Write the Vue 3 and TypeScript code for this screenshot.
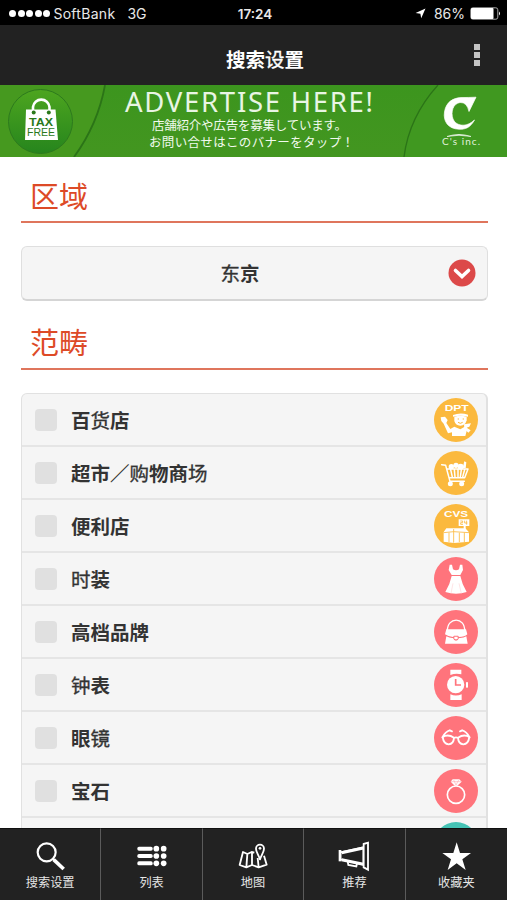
<script setup lang="ts">
interface Run {
  text: string
  light?: boolean
}
interface Category {
  id: string
  label: Run[]
  color: string
}

const amber = '#fbb93e'
const coral = '#ff747c'

const categories: Category[] = [
  { id: 'dept', color: amber, label: [{ text: '百' }, { text: '货', light: true }, { text: '店' }] },
  {
    id: 'cart',
    color: amber,
    label: [{ text: '超市／' }, { text: '购', light: true }, { text: '物商' }, { text: '场', light: true }],
  },
  { id: 'cvs', color: amber, label: [{ text: '便利店' }] },
  { id: 'dress', color: coral, label: [{ text: '时', light: true }, { text: '装' }] },
  { id: 'bag', color: coral, label: [{ text: '高档品牌' }] },
  { id: 'watch', color: coral, label: [{ text: '钟', light: true }, { text: '表' }] },
  { id: 'glasses', color: coral, label: [{ text: '眼' }, { text: '镜', light: true }] },
  { id: 'ring', color: coral, label: [{ text: '宝石' }] },
  { id: 'more', color: '#45c3b5', label: [] },
]

const tabs: { id: string; label: string }[] = [
  { id: 'search', label: '搜索设置' },
  { id: 'list', label: '列表' },
  { id: 'map', label: '地图' },
  { id: 'promo', label: '推荐' },
  { id: 'star', label: '收藏夹' },
]
</script>

<template>
  <div class="screen">
    <div class="status">
      <div class="carrier">
        <span class="dots"><i v-for="n in 5" :key="n"></i></span>
        <span class="operator">SoftBank</span>
        <span>3G</span>
      </div>
      <div class="clock">17:24</div>
      <div class="power">
        <svg class="locate" width="11" height="11" viewBox="0 0 11 11"><path d="M10.5.5 6.2 10.2 5.4 5.7.6 5z" fill="#fff" /></svg>
        <span>86%</span>
        <svg width="31" height="13" viewBox="0 0 31 13">
          <rect x=".8" y=".8" width="27" height="11.4" rx="2" fill="none" stroke="#aaa" />
          <rect x="1" y="1" width="22.5" height="11" rx="1" fill="#fff" />
          <path d="M29 4.5q2 2 0 4z" fill="#fff" />
        </svg>
      </div>
    </div>

    <header class="header">
      <h1>搜索<span class="light">设</span>置</h1>
      <div class="kebab"><i></i><i></i><i></i></div>
    </header>

    <svg class="banner" width="507" height="72" viewBox="0 0 507 72">
      <defs>
        <linearGradient id="badge" x1="0" y1="0" x2="0" y2="1">
          <stop offset="0" stop-color="#4da51f" /><stop offset="1" stop-color="#26851d" />
        </linearGradient>
        <linearGradient id="field" x1="0" y1="0" x2="0" y2="1">
          <stop offset="0" stop-color="#3c951e" /><stop offset="1" stop-color="#439620" />
        </linearGradient>
      </defs>
      <rect width="507" height="72" fill="url(#field)" />
      <path d="M0 0H105Q98 39 74 72H0z" fill="#46991f" />
      <path d="M507 0H438Q409 32 404 72H507z" fill="#409820" />
      <path d="M105 0Q98 39 74 72" fill="none" stroke="#2b7417" stroke-width="1.8" />
      <path d="M438 0Q409 32 404 72" fill="none" stroke="#2b7417" stroke-width="1.3" />
      <circle cx="40.5" cy="36.5" r="32" fill="url(#badge)" stroke="#2d7a1d" />
      <path d="M33 31V22a8.3 8.3 0 0 1 16.500 0V31" fill="none" stroke="#fff" stroke-width="2.600" />
      <path d="M26 24.500H55.500L58 55H25z" fill="#fff" />
      <circle cx="33.700" cy="27.500" r="2" fill="#2b791b" />
      <circle cx="48.800" cy="27.500" r="2" fill="#2b791b" />
      <text class="tax" x="29" y="40.500" textLength="24" lengthAdjust="spacingAndGlyphs">TAX</text>
      <text class="free" x="27" y="50.500" textLength="28" lengthAdjust="spacingAndGlyphs">FREE</text>
      <text class="advert" x="125" y="27" textLength="248">ADVERTISE HERE!</text>
      <text class="jp" x="152" y="45" textLength="195">店舗紹介や広告を募集しています。</text>
      <text class="jp" x="149" y="62" textLength="205">お問い合せはこのバナーをタップ！</text>
      <path d="M476 12.200 469 26.500Q467 17 460 17.500C453 18.500 450.500 27 453 34C456 41 466 43 474.500 35C470 43 465 44.500 459 44.200C448 44 443 36 444.500 27C446 17 453 13 461 12.600Q469 12.500 476 12.200z" fill="#fff" stroke="#fff" stroke-width=".7" />
      <path d="M447 51.500Q459 47.500 471 51.500Q459 49 447 51.500z" fill="#fff" stroke="#fff" stroke-width=".6" />
      <text class="brand" x="442" y="60" textLength="38">C's inc.</text>
    </svg>

    <main class="content">
      <h2>区域</h2>
      <button class="select">
        <span><span class="light">东</span>京</span>
        <svg width="28" height="28" viewBox="0 0 28 28">
          <circle cx="14" cy="14" r="13.500" fill="#dc4949" />
          <path d="M7.500 11.500 14 17.500 20.500 11.500" fill="none" stroke="#fff" stroke-width="3.600" stroke-linecap="round" />
        </svg>
      </button>
      <h2>范畴</h2>
      <ul class="list">
        <li v-for="c in categories" :key="c.id">
          <i class="check"></i>
          <span class="label"><span v-for="r in c.label" :key="r.text" :class="{ light: r.light }">{{ r.text }}</span></span>
          <svg class="icon" width="44" height="44" viewBox="0 0 132 132">
            <circle cx="66" cy="66" r="66" :fill="c.color" />
            <template v-if="c.id === 'dept'">
              <text class="mark" x="32" y="38" textLength="72" lengthAdjust="spacingAndGlyphs">DPT</text>
              <g fill="#fff">
                <path d="M57 51Q79 42 102 50V56Q79 50 57 56z" />
                <path d="M61 56Q79 51 98 56V67Q94 83 79 83Q65 83 61 69z" />
                <path d="M20 58 33 56 41 66 37 75 49 93 61 86 79 94 92 86 99 95 94 114H54V103L42 106 29 77 22 69z" />
                <path d="M90 79 111 76 106 86 98 89 110 97 103 104 91 92z" />
              </g>
              <g fill="none" :stroke="c.color" stroke-width="3"><path d="M71 63h4M86 63h4M72 73q7 6 14 0" /></g>
            </template>
            <template v-else-if="c.id === 'cart'">
              <g fill="#fff">
                <circle cx="52" cy="47" r="8" /><circle cx="66" cy="43" r="8" /><circle cx="80" cy="47" r="9" />
                <path d="M86 51 91 31 97 34 95 52z" />
              </g>
              <g fill="none" stroke="#fff" stroke-width="4.500" stroke-linecap="round" stroke-linejoin="round">
                <path d="M23 41 35 43 48 91H91M39 54H102L92 80H46M50 56l5 22M61 56l2 22M72 56v22M82 56l-3 22M92 56l-6 22" />
              </g>
              <circle cx="49" cy="98" r="7.500" fill="#fff" /><circle cx="83" cy="98" r="7.500" fill="#fff" />
            </template>
            <template v-else-if="c.id === 'cvs'">
              <text class="mark" x="30" y="38" textLength="72" lengthAdjust="spacingAndGlyphs">CVS</text>
              <path d="M74 46H106V66H95V76H89V66H74z" fill="#fff" />
              <path d="M79 51h7v5h-6v5h7M92 50v7h8M98 50v12" fill="none" :stroke="c.color" stroke-width="2.500" />
              <path d="M37 73H94L105 85V113L60 117 29 113V84z" fill="#fff" />
              <path d="M29 86 59 83 105 86M59 75V116M45 86V114M76 86V114M91 86V114" fill="none" :stroke="c.color" stroke-width="2.500" />
            </template>
            <template v-else-if="c.id === 'dress'">
              <path d="M47 23H54L57 37Q66 43 75 37L78 23H85L87 39 79 54H53L44 39z" fill="#fff" />
              <path d="M53 57H79Q84 82 98 105Q66 116 34 105Q48 82 53 57z" fill="#fff" />
              <path d="M57 79 51 109M75 79 82 109" stroke="#ffc8cb" stroke-width="1.500" />
            </template>
            <template v-else-if="c.id === 'bag'">
              <path d="M40 64C39 19 94 19 92 64" fill="none" stroke="#fff" stroke-width="4" />
              <path d="M37 58H96L100 73Q92 81 75 81L72 77H60L57 81Q42 80 33 73z" fill="#fff" />
              <path d="M37 79Q48 85 57 84Q60 92 66 92T75 84Q88 85 97 79L101 101H33z" fill="#fff" />
              <path d="M61 80H71V86Q66 90 61 86z" fill="#fff" />
            </template>
            <template v-else-if="c.id === 'watch'">
              <path d="M49 20H82V34Q66 29 49 36zM49 94Q66 101 83 94V111H49z" fill="#fff" />
              <circle cx="65" cy="65" r="26" fill="#fff" />
              <path d="M65 48V66H81" fill="none" :stroke="c.color" stroke-width="5" />
              <rect x="96" y="57" width="6" height="17" rx="2" fill="#fff" />
            </template>
            <g v-else-if="c.id === 'glasses'" fill="none" stroke="#fff" stroke-width="5.500" stroke-linecap="round">
              <path d="M26 63Q42 53 60 65Q59 84 44 85Q29 84 26 63zM106 63Q90 53 72 65Q73 84 88 85Q103 84 106 63zM60 66Q66 62 72 66M25 64Q35 46 47 43L54 46M107 64Q97 46 85 43L78 46" />
            </g>
            <template v-else-if="c.id === 'ring'">
              <circle cx="66" cy="77" r="26" fill="none" stroke="#fff" stroke-width="5" />
              <path d="M56 31H76L83 38 70 50H62L50 38z" fill="#fff" />
              <path d="M51 38H82M59 33l7 15 8-15" fill="none" stroke="#ff9ba0" stroke-width="1.500" />
            </template>
          </svg>
        </li>
      </ul>
    </main>

    <nav class="tabs">
      <a v-for="t in tabs" :key="t.id">
        <svg width="34" height="32" viewBox="0 0 102 96">
          <template v-if="t.id === 'search'">
            <circle cx="41" cy="37" r="27" fill="none" stroke="#fff" stroke-width="6.500" />
            <path d="M62 59 92 87" stroke="#fff" stroke-width="11" /><path d="M58 55 67 63" stroke="#fff" stroke-width="5" />
          </template>
          <g v-else-if="t.id === 'list'" fill="#fff">
            <template v-for="y in [26, 48, 70]" :key="y">
              <rect x="7" :y="y - 6" width="46" height="12" rx="5" />
              <circle cx="64" :cy="y" r="8.500" /><circle cx="86" :cy="y" r="8.500" />
            </template>
          </g>
          <g v-else-if="t.id === 'map'" fill="none" stroke="#fff" stroke-width="5.500" stroke-linejoin="round">
            <path d="M55 38 47 36 34 42 21 36 11 75 31 82 48 75 68 82 92 74 84 47M34 42 31 82M48 38V75M65 54 68 82" />
            <path d="M72 58C67 44 60 36 60 26A12 12 0 0 1 84 26C84 36 77 44 72 58z" fill="#222" /><circle cx="72" cy="25" r="4" fill="#fff" stroke="none" />
          </g>
          <g v-else-if="t.id === 'promo'" fill="none" stroke="#fff" stroke-width="5.500">
            <path d="M9 30V64" stroke-width="8" />
            <path d="M10 37 79 22V74L10 58zM80 12 93 8V89L80 82z" /><path d="M14 38 79 24M14 59 79 73" stroke-width="9" />
            <path d="M32 64 34 75 58 79 60 70" />
          </g>
          <path v-else d="M53 7 63 39H96L70 58 80 90 53 70 26 90 36 58 10 39H43z" fill="#fff" />
        </svg>
        <span>{{ t.label }}</span>
      </a>
    </nav>
  </div>
</template>

<style>
body {
  margin: 0;
  overflow: hidden;
}
</style>

<style scoped>
.screen {
  width: 507px;
  height: 900px;
  display: flex;
  flex-direction: column;
  overflow: hidden;
  background: #fff;
  color: #333;
  font-family: "Liberation Sans", "Noto Sans CJK SC", sans-serif;
}
.status {
  flex: none;
  height: 25px;
  display: grid;
  grid-template-columns: 1fr auto 1fr;
  align-items: center;
  padding: 2px 6px 0 9px;
  box-sizing: border-box;
  background: #000;
  color: #e8e8e8;
  font-family: Inter, "Liberation Sans", sans-serif;
  font-size: 14px;
}
.carrier,
.power,
.dots {
  display: flex;
  align-items: center;
}
.dots {
  gap: 1.600px;
  margin-right: 3px;
}
.dots i {
  width: 7px;
  height: 7px;
  border-radius: 50%;
  background: #fff;
}
.operator {
  margin-right: 12px;
  letter-spacing: 0.3px;
}
.clock {
  font-weight: 600;
  font-size: 13.500px;
}
.power {
  justify-content: flex-end;
  gap: 5px;
}
.locate {
  margin-right: 3px;
}
.header {
  flex: none;
  height: 60px;
  display: grid;
  grid-template-columns: 30px 1fr 30px;
  align-items: center;
  padding: 0 15px 0 38px;
  background: #222;
  color: #fff;
}
h1 {
  grid-column: 2;
  margin: 8px 0 0;
  font: bold 19.500px/28px "Noto Sans CJK SC", sans-serif;
  text-align: center;
}
.kebab {
  display: grid;
  gap: 2px;
  justify-content: center;
}
.kebab i {
  width: 6px;
  height: 6px;
  background: #c4c4c4;
}
.banner {
  flex: none;
  display: block;
}
.tax {
  font: bold 11.500px "Liberation Sans", sans-serif;
  fill: #2b791b;
}
.free {
  font: 11px "Liberation Sans", sans-serif;
  fill: #2b791b;
}
.advert {
  font: 400 27.500px "Noto Sans", "Open Sans", sans-serif;
  fill: #e9f5e4;
}
.jp {
  font: 12.500px "Noto Sans CJK JP", sans-serif;
  fill: #f1faee;
}
.brand {
  font: 10px Lato, sans-serif;
  fill: #e2f2dc;
}
.content {
  flex: 1;
  min-height: 0;
  overflow: hidden;
  padding: 0 19px 0 21px;
}
h2 {
  margin: 0;
  height: 66px;
  padding: 17px 0 0 9px;
  box-sizing: border-box;
  border-bottom: 2px solid #df755c;
  color: #dd4a27;
  font: 29px/42px "Noto Sans CJK SC", sans-serif;
}
.select {
  display: grid;
  grid-template-columns: 28px 1fr 28px;
  align-items: center;
  width: 467px;
  height: 55px;
  margin: 23px 0 2px;
  padding: 0 11px 0 0;
  border: 1px solid #dfdfdf;
  border-bottom: 2px solid #d5d5d5;
  border-radius: 6px;
  background: #f5f5f5;
  color: #333;
  font: bold 19.500px/28px "Noto Sans CJK SC", sans-serif;
}
.select > span {
  grid-column: 2;
  padding-right: 18px;
}
.light {
  font-weight: 400;
  -webkit-text-stroke: 0.35px currentColor;
}
.select + h2 {
  height: 67px;
}
.list {
  margin: 23px 0 0;
  padding: 0;
  list-style: none;
  border: solid #e1e1e1;
  border-width: 1px 2px 0 1px;
  border-radius: 6px 6px 0 0;
  background: #f5f5f5;
}
li {
  display: flex;
  align-items: center;
  height: 53px;
  box-sizing: border-box;
  padding: 0 8px 0 13px;
  border-bottom: 2px solid #e5e5e5;
}
.check {
  width: 22px;
  height: 22px;
  border-radius: 4px;
  background: #e0e0e0;
}
.label {
  flex: 1;
  margin-left: 14px;
  font: bold 19.500px/28px "Noto Sans CJK SC", sans-serif;
}
.icon {
  display: block;
}
.mark {
  font: bold 29px "Liberation Sans", sans-serif;
  fill: #fff;
}
.tabs {
  flex: none;
  display: grid;
  grid-template-columns: repeat(5, 1fr);
  height: 72px;
  background: #222;
  color: #e6e6e6;
}
.tabs a {
  display: flex;
  flex-direction: column;
  align-items: center;
  padding-top: 11px;
  border-top: 1px solid #101010;
  border-right: 1px solid #5b5b5b;
  font: 12.200px/20px "Noto Sans CJK SC", sans-serif;
}
.tabs a:last-child {
  border-right: 0;
}
</style>
